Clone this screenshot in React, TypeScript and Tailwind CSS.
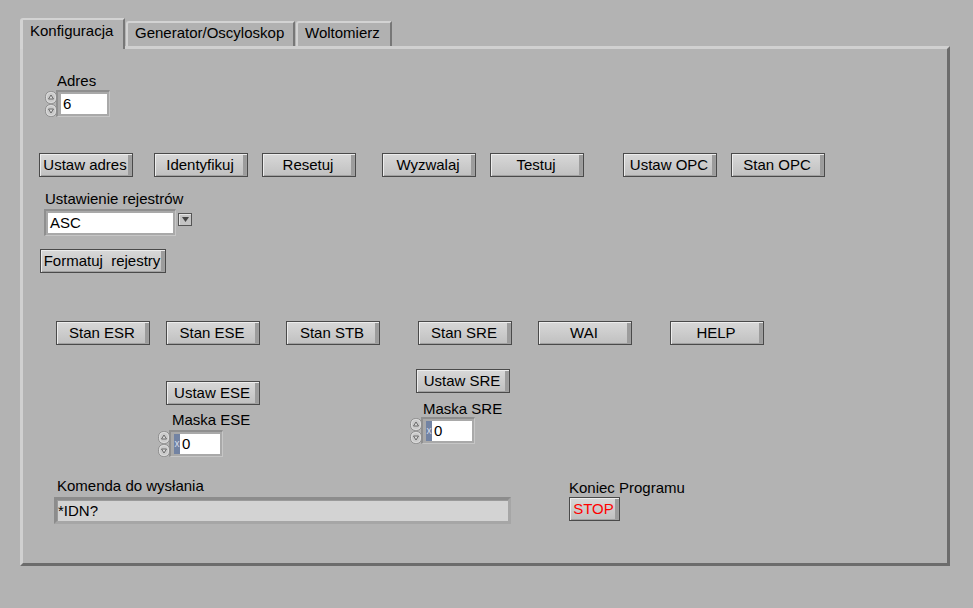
import React from 'react';
import { twMerge } from 'tailwind-merge';

// LabVIEW-like front panel: "Konfiguracja" tab

function LvButton({ label, className, red }: { label: string; className?: string; red?: boolean }) {
  return (
    <button
      type="button"
      className={twMerge(
        'flex h-[24px] w-[94px] shrink-0 items-center justify-center border border-[#4a4a4a] bg-linear-to-b from-[#d8d8d8] to-[#c0c0c0] pr-[2px] shadow-[inset_1px_1px_0_#ededed,inset_-1px_-1px_0_#a0a0a0,inset_-4px_0_0_#9c9c9c]',
        red ? 'text-[#ff0000]' : 'text-black',
        className
      )}
    >
      {label}
    </button>
  );
}

function Arrow({ down }: { down?: boolean }) {
  return (
    <svg width="12" height="13" viewBox="0 0 12 13">
      <rect x="0.5" y="0.5" width="11" height="12" rx="5" fill="#cacaca" stroke="#8e8e8e" />
      <rect x="1.5" y="1.5" width="9" height="10" rx="4" fill="none" stroke="#e2e2e2" strokeWidth="0.8" />
      {down ? (
        <path d="M3.5 5 L8.5 5 L6 9 Z" fill="#dadada" stroke="#5e5e5e" strokeWidth="0.9" />
      ) : (
        <path d="M3.5 8 L8.5 8 L6 4 Z" fill="#dadada" stroke="#5e5e5e" strokeWidth="0.9" />
      )}
    </svg>
  );
}

function Numeric({ value, radix }: { value: string; radix?: boolean }) {
  return (
    <div className="flex items-center">
      <div className="-mr-[1px] flex w-[12px] flex-col">
        <Arrow />
        <Arrow down />
      </div>
      <div className="flex h-[27px] w-[54px] items-stretch border-t-2 border-l-2 border-t-[#8f8f8f] border-l-[#8f8f8f] border-b border-r border-b-[#c6c6c6] border-r-[#c6c6c6] bg-[#a9a9a9] py-[2px] pr-[2px] pl-[3px]">
        {radix && (
          <div className="flex w-[6px] items-center justify-center bg-[#7283a3] text-[10px] leading-none text-[#d6dcea]">
            x
          </div>
        )}
        <div className="flex flex-1 items-center bg-white pl-[2px] text-black">{value}</div>
      </div>
    </div>
  );
}

export default function App() {
  return (
    <div className="h-[608px] w-[973px] overflow-hidden bg-[#b3b3b3] pt-[18px] pl-[20px] font-['Liberation_Sans',Arial,sans-serif] text-[15px] leading-[16px] text-black">
      {/* Tabs */}
      <div className="flex h-[28px] items-end">
        <div className="relative z-10 -mb-[3px] h-[31px] w-[105px] rounded-tl-[3px] border-t-2 border-l-[3px] border-r-2 border-t-[#d3d3d3] border-l-[#d3d3d3] border-r-[#777] bg-[#b3b3b3] pt-[3px] pl-[7px]">
          Konfiguracja
        </div>
        <div className="ml-[1px] h-[25px] w-[169px] rounded-tl-[3px] border-t-2 border-l-2 border-r-2 border-t-[#d3d3d3] border-l-[#d3d3d3] border-r-[#777] bg-[#b1b1b1] pt-[2px] pl-[7px]">
          Generator/Oscyloskop
        </div>
        <div className="ml-[1px] h-[25px] w-[96px] rounded-tl-[3px] border-t-2 border-l-2 border-r-2 border-t-[#d3d3d3] border-l-[#d3d3d3] border-r-[#777] bg-[#b1b1b1] pt-[2px] pl-[7px]">
          Woltomierz
        </div>
      </div>

      {/* Panel */}
      <div className="flex h-[520px] w-[930px] flex-col border-[3px] border-t-[#d0d0d0] border-l-[#d0d0d0] border-r-[#6c6c6c] border-b-[#6c6c6c] bg-[#b3b3b3]">
        {/* Adres */}
        <div className="mt-[24px] ml-[22px] flex flex-col items-start">
          <div className="pl-[12px]">Adres</div>
          <div className="mt-[1px]">
            <Numeric value="6" />
          </div>
        </div>

        {/* Buttons row 1 */}
        <div className="mt-[36px] ml-[16px] flex">
          <LvButton label="Ustaw adres" />
          <LvButton label="Identyfikuj" className="ml-[21px]" />
          <LvButton label="Resetuj" className="ml-[14px]" />
          <LvButton label="Wyzwalaj" className="ml-[26px]" />
          <LvButton label="Testuj" className="ml-[14px]" />
          <LvButton label="Ustaw OPC" className="ml-[39px]" />
          <LvButton label="Stan OPC" className="ml-[14px]" />
        </div>

        {/* Ustawienie rejestrów */}
        <div className="mt-[14px] ml-[22px]">Ustawienie rejestrów</div>
        <div className="mt-[2px] ml-[21px] flex items-start">
          <div className="flex h-[27px] w-[132px] border-t-2 border-l-2 border-t-[#8f8f8f] border-l-[#8f8f8f] border-b border-r border-b-[#c6c6c6] border-r-[#c6c6c6] bg-[#a9a9a9] p-[2px]">
            <div className="flex flex-1 items-center bg-white pl-[2px]">ASC</div>
          </div>
          <div className="mt-[4px] ml-[2px] flex h-[13px] w-[14px] items-center justify-center border border-[#555] bg-[#c4c4c4] shadow-[inset_1px_1px_0_#e4e4e4]">
            <svg width="7" height="5" viewBox="0 0 7 5">
              <path d="M0 0 L7 0 L3.5 5 Z" fill="#444" />
            </svg>
          </div>
        </div>

        {/* Formatuj */}
        <div className="mt-[13px] ml-[17px] flex">
          <LvButton label="Formatuj  rejestry" className="w-[126px] whitespace-pre" />
        </div>

        {/* Buttons row 2 */}
        <div className="mt-[48px] ml-[33px] flex">
          <LvButton label="Stan ESR" />
          <LvButton label="Stan ESE" className="ml-[16px]" />
          <LvButton label="Stan STB" className="ml-[26px]" />
          <LvButton label="Stan SRE" className="ml-[38px]" />
          <LvButton label="WAI" className="ml-[26px]" />
          <LvButton label="HELP" className="ml-[38px]" />
        </div>

        {/* Masks */}
        <div className="ml-[135px] flex items-start">
          <div className="mt-[36px] flex w-[102px] flex-col items-start">
            <LvButton label="Ustaw ESE" className="ml-[8px]" />
            <div className="mt-[7px] ml-[14px]">Maska ESE</div>
            <div className="mt-[2px]">
              <Numeric value="0" radix />
            </div>
          </div>
          <div className="mt-[24px] ml-[150px] flex flex-col items-start">
            <LvButton label="Ustaw SRE" className="ml-[6px]" />
            <div className="mt-[8px] ml-[13px]">Maska SRE</div>
            <div>
              <Numeric value="0" radix />
            </div>
          </div>
        </div>

        {/* Command + stop */}
        <div className="mt-[21px] ml-[31px] flex items-start">
          <div className="flex flex-col">
            <div className="pl-[3px]">Komenda do wysłania</div>
            <div className="mt-[3px] flex h-[27px] w-[457px] border-t-[3px] border-l-[3px] border-t-[#8c8c8c] border-l-[#8c8c8c] border-b-[3px] border-r-[3px] border-b-[#a6a6a6] border-r-[#a6a6a6] bg-[#d3d3d3] shadow-[inset_1px_1px_0_#9a9a9a]">
              <div className="flex items-center pl-[1px]">*IDN?</div>
            </div>
          </div>
          <div className="ml-[58px] flex flex-col items-start">
            <div className="mt-[2px]">Koniec Programu</div>
            <LvButton label="STOP" red className="mt-[1px] w-[51px]" />
          </div>
        </div>
      </div>
    </div>
  );
}
